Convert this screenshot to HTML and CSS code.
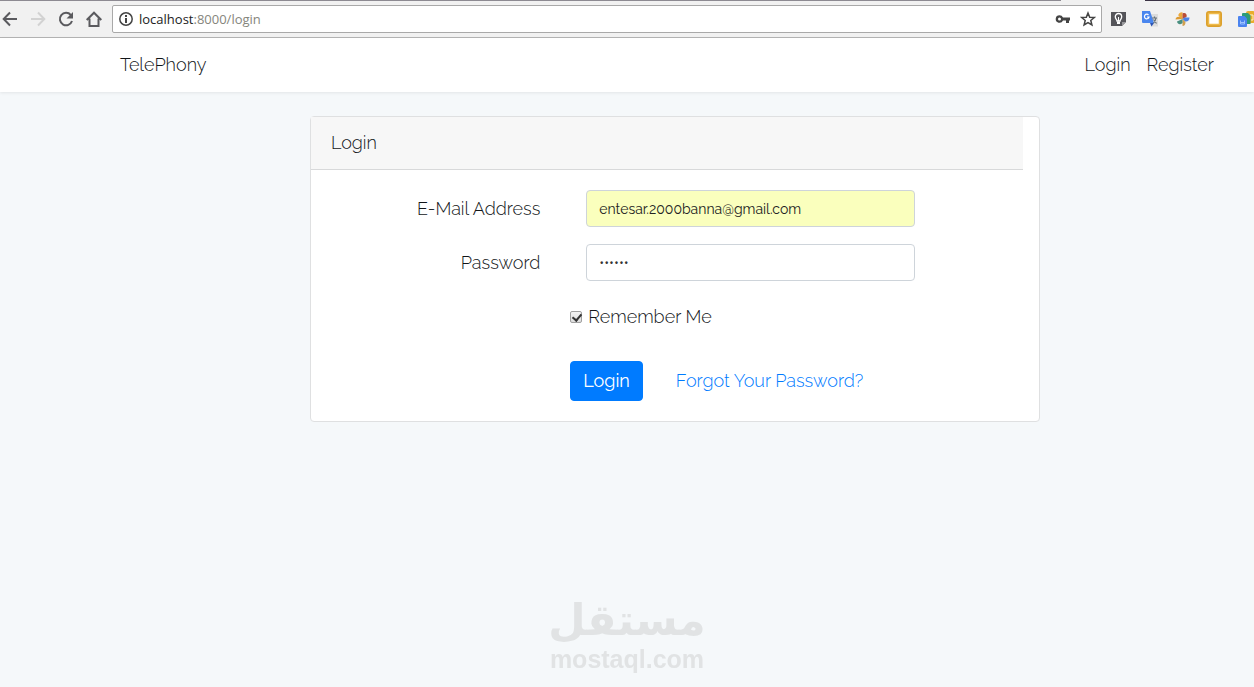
FILE: index.html
```html
<!DOCTYPE html>
<html lang="en">
<head>
  <meta charset="UTF-8">
  <title>TelePhony</title>
  <link rel="stylesheet" href="styles.css">
</head>
<body>

  <!-- Browser toolbar -->
  <div class="tab-strip"><span class="tab-edge"></span><span class="tab-end"></span></div>
  <div class="toolbar">
    <div class="tools">
      <button class="tool-btn" aria-label="Back">
        <svg width="16" height="16" viewBox="0 0 16 16" fill="none" stroke="#5a5a5e" stroke-width="2"><path d="M15 8H2.500M8 1.500L1.700 8 8 14.500"/></svg>
      </button>
      <button class="tool-btn" aria-label="Forward">
        <svg width="16" height="16" viewBox="0 0 16 16" fill="none" stroke="#d2d2d2" stroke-width="2"><path d="M1 8h12.500M8 1.500L14.300 8 8 14.500"/></svg>
      </button>
      <button class="tool-btn" aria-label="Reload">
        <svg width="16" height="16" viewBox="0 0 16 16"><path d="M12.800 4A6.200 6.200 0 1 0 14 10" fill="none" stroke="#5a5a5e" stroke-width="2"/><path d="M15 1v6.500H8.500z" fill="#5a5a5e"/></svg>
      </button>
      <button class="tool-btn" aria-label="Home">
        <svg width="16" height="16" viewBox="0 0 16 16" fill="none" stroke="#5a5a5e" stroke-width="2"><path d="M.7 9L8 1.700 15.300 9M3.500 7.500V15h9V7.500"/></svg>
      </button>
    </div>
    <div class="address">
      <svg width="16" height="16" viewBox="0 0 16 16"><circle cx="8" cy="8" r="6.200" fill="none" stroke="#444" stroke-width="1.500"/><path d="M7 4h2v2H7zM7 7h2v5H7z" fill="#444"/></svg>
      <span class="url">localhost<span class="path">:8000/login</span></span>
      <svg class="key" width="16" height="16" viewBox="0 0 16 16"><path d="M4.500 4.200a3.800 3.800 0 1 0 3.500 5.300h3V12h3V9.500h1v-3H8a3.800 3.800 0 0 0-3.500-2.300zm0 2.300a1.500 1.500 0 1 1 0 3 1.500 1.500 0 0 1 0-3z" fill="#444" fill-rule="evenodd"/></svg>
      <svg width="16" height="16" viewBox="0 0 16 16"><path d="M8 2l1.700 4.200 4.600.3-3.500 3 1.100 4.500L8 11.600 4.100 14l1.100-4.500-3.500-3 4.600-.3z" fill="none" stroke="#444" stroke-width="1.500"/></svg>
    </div>
    <div class="extensions">
      <svg width="16" height="16" viewBox="0 0 16 16"><path d="M1 1h15v10l-4 4H1z" fill="#55555a"/><path d="M16 11l-4 4v-4z" fill="#99999c"/><path d="M7 10C7 8.500 5.300 8 5.300 5.700a3.200 3.200 0 0 1 6.400 0C11.700 8 10 8.500 10 10z" fill="none" stroke="#fff" stroke-width="1.300"/><path d="M7 10.500h3V13H7zM8 6h1v4H8z" fill="#fff"/></svg>
      <svg width="16" height="16" viewBox="0 0 16 16"><path d="M6 3h10v12.500H9z" fill="#dcdcdc"/><path d="M0 0h8l4 12H1a1 1 0 0 1-1-1z" fill="#4a86ee"/><path d="M8 12h4l-2.500 3.500z" fill="#2c55b5"/><path d="M6.500 4a2.300 2.300 0 1 0 .5 2H5" fill="none" stroke="#fff" stroke-width="1.200"/><path d="M10 7h5M12.500 5.500V7M14 7c-.5 2.500-1.500 4-2.500 5M11.500 8.500l3 4" fill="none" stroke="#66717a" stroke-width="1.200"/></svg>
      <svg width="16" height="16" viewBox="0 0 16 16"><path d="M8.500 8V1.200C6 1 4.300 2.500 4.300 4.500L6.500 7z" fill="#eaa83c"/><path d="M8.500 8L8.500 2.500C11 1 13.500 3 12.500 6z" fill="#b94c36"/><path d="M1.500 8.500C2 5.500 5 4.500 8.500 8z" fill="#dc9a32"/><path d="M8.500 8l2-1.500H15.500C15.500 9.500 13.500 11 11 10.500z" fill="#4b83e6"/><path d="M8.500 8l3 3c0 2.500-1 4-3 4z" fill="#d0a050"/><path d="M8.500 8v4c-2 2-5 1.500-5.500-1.500z" fill="#4a8f80"/></svg>
      <svg width="16" height="16" viewBox="0 0 16 16"><rect x="1" y="1" width="14" height="14" rx="2" fill="#fff" stroke="#dca02c" stroke-width="2"/><rect x="2.500" y="2.500" width="11" height="11" fill="none" stroke="#efbb4b" stroke-width="1.500"/></svg>
      <svg width="16" height="16" viewBox="0 0 16 16"><rect x="8" y="0" width="9" height="12" rx="2" fill="#e9ad2c"/><path d="M12 4h3v5h-2" fill="none" stroke="#fff3cc"/><path d="M4 3a1 1 0 0 1 1-1h5l2.500 2.500V13H4z" fill="#2d9b77"/><path d="M0 6a1 1 0 0 1 1-1h5.500L9 7.500V15a1 1 0 0 1-1 1H1a1 1 0 0 1-1-1z" fill="#4a83ef"/><path d="M2.500 9.500V13h4V9.500M2.500 11.500h4" fill="none" stroke="#9dc2ff"/></svg>
    </div>
  </div>

  <nav class="navbar">
    <div class="container nav-row">
      <a class="brand" href="#">TelePhony</a>
      <div class="nav-links">
        <a href="#">Login</a>
        <a href="#">Register</a>
      </div>
    </div>
  </nav>

  <main>
    <div class="container">
      <div class="card">
        <div class="card-header">Login</div>

        <form class="card-body">
          <div class="form-row">
            <label for="email">E-Mail Address</label>
            <div class="field">
              <input class="form-control autofill" id="email" type="email" value="entesar.2000banna@gmail.com">
            </div>
          </div>

          <div class="form-row">
            <label for="password">Password</label>
            <div class="field">
              <input class="form-control" id="password" type="password" value="secret">
            </div>
          </div>

          <div class="form-row offset remember">
            <input class="check" id="remember" type="checkbox" checked>
            <label class="check-label" for="remember">Remember Me</label>
          </div>

          <div class="form-row offset actions">
            <button class="btn" type="submit">Login</button>
            <a class="forgot" href="#">Forgot Your Password?</a>
          </div>
        </form>
      </div>
    </div>
  </main>

  <div class="watermark">
    <span class="mark-ar" lang="ar" dir="rtl">مستقل</span>
    <span class="mark-en">mostaql.com</span>
  </div>

</body>
</html>
```

FILE: styles.css
```css
* {
  box-sizing: border-box;
}

body {
  margin: 0;
  min-height: 100vh;
  background-color: #f5f8fa;
  font-family: Raleway, Lato, sans-serif;
  font-size: 18px;
  font-weight: 300;
  line-height: 29px;
  color: #111518;
  overflow: hidden;
}

a {
  text-decoration: none;
}

/* browser toolbar */
.tab-strip {
  display: flex;
  justify-content: space-between;
  height: 1px;
  background-color: #f1f1f1;
}

.tab-edge {
  width: 1061px;
  background-color: #8d8a92;
}

.tab-end {
  width: 109px;
  background-color: #3b3344;
}

.toolbar {
  display: flex;
  align-items: center;
  height: 37px;
  padding-left: 2px;
  background-color: #f1f1f1;
  border-bottom: 1px solid #b5b5b5;
}

.tools {
  display: flex;
  gap: 12px;
}

.tool-btn {
  width: 16px;
  height: 16px;
  padding: 0;
  border: none;
  background: none;
}

.toolbar svg {
  display: block;
  flex: none;
}

.address {
  flex: 1;
  display: flex;
  align-items: center;
  height: 28px;
  margin: 0 8px 0 10px;
  padding: 0 5px;
  background-color: #fff;
  border: 1px solid #a9a9a9;
  border-radius: 2px;
}

.url {
  flex: 1;
  margin-left: 5px;
  font-family: "Open Sans", "Noto Sans", sans-serif;
  font-size: 13px;
  font-weight: 400;
  line-height: 18px;
  color: #222;
}

.path {
  color: #85857c;
}

.key {
  margin-right: 9px;
}

.extensions {
  display: flex;
  gap: 16px;
}

/* page header */
.navbar,
main {
  padding-left: 96px;
}

.navbar {
  background-color: #fff;
  box-shadow: 0 1px 3px rgba(0, 0, 0, 0.08);
}

.container {
  max-width: 1140px;
  margin: 0 auto;
  padding: 0 15px;
}

.nav-row {
  display: flex;
  align-items: center;
  justify-content: space-between;
  height: 54px;
  padding-bottom: 2px;
}

.nav-row a {
  color: #111518;
}

.nav-links {
  display: flex;
  gap: 16px;
  padding-right: 16px;
}

/* login card */
.card {
  width: 66%;
  max-width: 730px;
  margin: 24px auto;
  background-color: #fff;
  border: 1px solid #dfe0e1;
  border-radius: 4px;
}

.card-header {
  margin-right: 16px;
  padding: 11px 20px 12px;
  background-color: #f7f7f7;
  border-bottom: 1px solid #d8d9da;
}

.card-body {
  padding: 20px;
}

.form-row {
  display: flex;
  align-items: center;
  margin: 0 -15px 17px;
}

.form-row label {
  flex: 0 0 33.33%;
  padding: 0 15px;
  text-align: right;
}

.field {
  flex: 0 0 50%;
  padding: 0 15px;
  margin-left: 16px;
}

.form-control {
  display: block;
  width: 100%;
  height: 37px;
  padding: 6px 12px;
  border: 1px solid #ced4da;
  border-radius: 4px;
  background-color: #fff;
  font-family: inherit;
  font-size: 14px;
  font-weight: 400;
  color: #333;
}

.autofill {
  background-color: #faffbd;
  color: #222;
}

/* empty label column */
.offset::before {
  content: "";
  flex: 0 0 33.33%;
}

.remember {
  height: 37px;
  margin-bottom: 26px;
}

.check {
  appearance: none;
  width: 12px;
  height: 12px;
  margin: 0 6px 0 15px;
  border: 1px solid #a0a0a0;
  border-radius: 2px;
  background: linear-gradient(#f2f2f2, #dedede);
}

.check:checked::after {
  content: "";
  display: block;
  width: 4px;
  height: 7px;
  margin: 0 0 0 3px;
  border: solid #333;
  border-width: 0 2px 2px 0;
  transform: rotate(40deg);
}

.form-row .check-label {
  flex: none;
  padding: 0;
}

.actions {
  margin-bottom: 0;
}

.btn {
  height: 40px;
  margin-left: 15px;
  padding: 0 12px 2px;
  border: 1px solid #007bff;
  border-radius: 4px;
  background-color: #007bff;
  font-family: inherit;
  font-size: 18px;
  font-weight: 400;
  color: #fff;
}

.forgot {
  margin-left: 33px;
  padding-bottom: 2px;
  color: #007bff;
}

/* watermark over the page */
.watermark {
  position: fixed;
  left: 0;
  right: 0;
  bottom: 14px;
  display: flex;
  flex-direction: column;
  align-items: center;
  color: #e1e3e4;
  font-weight: 700;
  pointer-events: none;
}

.mark-ar {
  font-family: "DejaVu Sans", sans-serif;
  font-size: 43px;
  line-height: 50px;
}

.mark-en {
  font-family: "Liberation Sans", Arial, sans-serif;
  font-size: 25px;
  line-height: 28px;
}
```
